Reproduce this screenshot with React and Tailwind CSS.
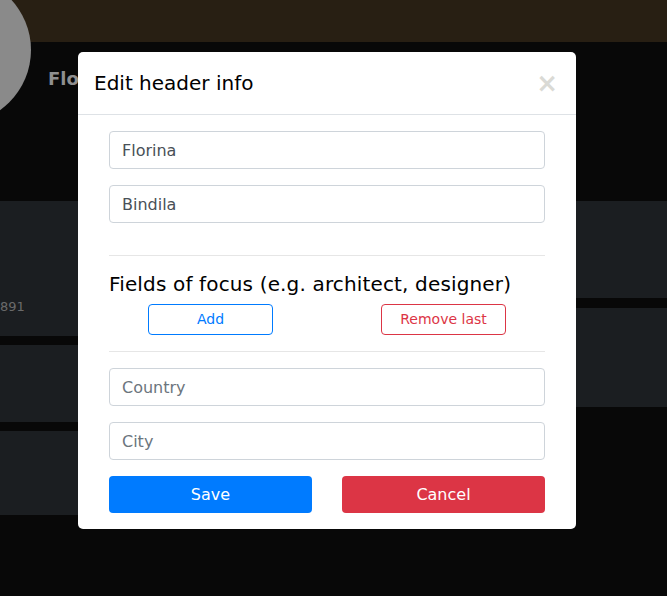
export default function App() {
  const font = { fontFamily: '"DejaVu Sans", Verdana, sans-serif' };
  const inputCls =
    "block w-full h-[38px] px-[12px] border border-[#ced4da] rounded-[4px] text-[16px] text-[#495057] placeholder:text-[#6c757d] outline-none";
  return (
    <div className="relative w-[667px] h-[596px] overflow-hidden bg-[#080808]" style={font}>
      {/* background page */}
      <div className="h-[42px] bg-[#281f13]" />
      <div className="absolute left-[-117px] top-[-24px] w-[148px] h-[148px] rounded-full bg-[#8a8a8a]" />
      <div className="h-[159px] pl-[48px] pt-[23px]">
        <span className="text-[18px] font-bold text-[#8f8f8f]">Florina Bindila</span>
      </div>
      <div className="flex gap-[20px]">
        <div className="w-[330px] flex flex-col gap-[9px]">
          <div className="h-[135px] bg-[#1b1e21] pt-[96px]">
            <span className="block text-[13px] text-[#6a6a6a]">891</span>
          </div>
          <div className="h-[77px] bg-[#1b1e21]" />
          <div className="h-[84px] bg-[#1b1e21]" />
        </div>
        <div className="flex-1 flex flex-col gap-[10px]">
          <div className="h-[97px] bg-[#1b1e21]" />
          <div className="h-[99px] bg-[#1b1e21]" />
        </div>
      </div>

      {/* modal */}
      <div className="absolute left-[78px] top-[52px] w-[498px] bg-white rounded-[5px]">
        <div className="flex items-center justify-between px-4 py-4 border-b border-[#dee2e6]">
          <h5 className="text-[20px] leading-[30px] text-black">Edit header info</h5>
          <span className="text-[26px] leading-[30px] font-bold text-[#dadad5] mr-[2px]">×</span>
        </div>
        <div className="p-4">
          <div className="px-[15px] flex flex-col">
            <input className={inputCls} defaultValue="Florina" style={font} />
            <input className={inputCls + " mt-4"} defaultValue="Bindila" style={font} />
            <div className="mt-8 border-t border-[#e6e6e6]" />
            <h5 className="mt-4 text-[20px] leading-[24px] text-black tracking-[0.15px]">
              Fields of focus (e.g. architect, designer)
            </h5>
            <div className="mt-2 flex justify-between px-[39px]">
              <button className="w-[125px] h-[31px] border border-[#007bff] rounded-[4px] text-[14px] text-[#007bff] bg-white">
                Add
              </button>
              <button className="w-[125px] h-[31px] border border-[#dc3545] rounded-[4px] text-[14px] text-[#dc3545] bg-white">
                Remove last
              </button>
            </div>
            <div className="mt-4 border-t border-[#e6e6e6]" />
            <input className={inputCls + " mt-4"} placeholder="Country" style={font} />
            <input className={inputCls + " mt-4"} placeholder="City" style={font} />
            <div className="mt-4 grid grid-cols-2 gap-[30px]">
              <button className="h-[37px] rounded-[4px] bg-[#007bff] text-white text-[16px]">Save</button>
              <button className="h-[37px] rounded-[4px] bg-[#dc3545] text-white text-[16px]">Cancel</button>
            </div>
          </div>
        </div>
      </div>
    </div>
  );
}
